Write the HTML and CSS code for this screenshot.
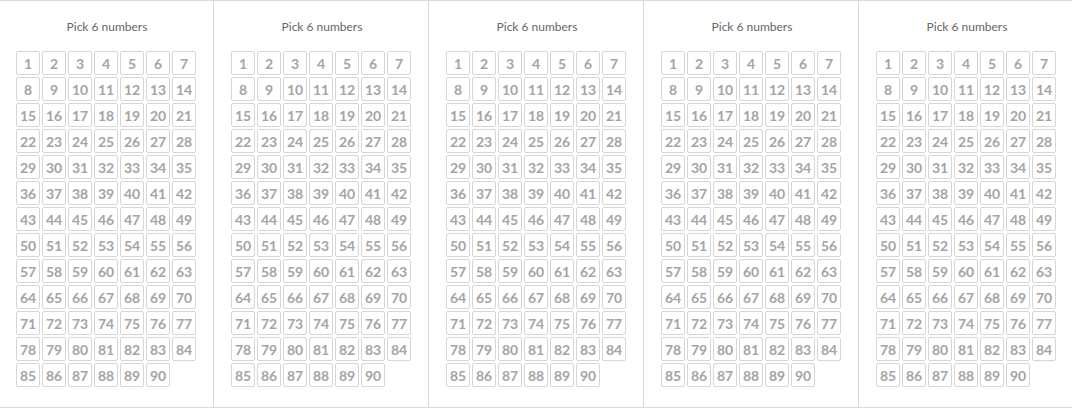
FILE: index.html
```html
<!DOCTYPE html>
<html lang="en">
<head>
<meta charset="utf-8">
<title>Pick 6 numbers</title>
<link rel="stylesheet" href="styles.css">
</head>
<body>
<div class="tickets" id="tickets">
  <section class="ticket"><h2 class="ticket-title">Pick 6 numbers</h2><div class="grid"></div></section>
  <section class="ticket"><h2 class="ticket-title">Pick 6 numbers</h2><div class="grid"></div></section>
  <section class="ticket"><h2 class="ticket-title">Pick 6 numbers</h2><div class="grid"></div></section>
  <section class="ticket"><h2 class="ticket-title">Pick 6 numbers</h2><div class="grid"></div></section>
  <section class="ticket"><h2 class="ticket-title">Pick 6 numbers</h2><div class="grid"></div></section>
</div>
<script src="script.js"></script>
</body>
</html>
```

FILE: styles.css
```css
html, body {
  margin: 0;
  padding: 0;
  background: #fff;
  overflow: hidden;
}
body {
  width: 1072px;
  height: 408px;
  font-family: Lato, "Open Sans", "Liberation Sans", sans-serif;
}
.tickets {
  display: flex;
  margin-left: -2px;
  border-top: 1px solid #d9d9d9;
  border-bottom: 1px solid #d9d9d9;
  height: 406px;
}
.ticket {
  flex: none;
  width: 215px;
  border-left: 1px solid #d9d9d9;
  padding: 0 0 0 17px;
  box-sizing: border-box;
}
.ticket-title {
  margin: 0;
  padding: 17px 0 0 0;
  height: 50px;
  box-sizing: border-box;
  width: 182px;
  text-align: center;
  font-size: 12px;
  font-weight: 400;
  color: #666;
  line-height: 17px;
}
.grid {
  display: grid;
  grid-template-columns: repeat(7, 24px);
  grid-auto-rows: 24px;
  gap: 2px;
}
.cell {
  box-sizing: border-box;
  border: 1px solid #d6d6d6;
  border-radius: 2px;
  display: flex;
  align-items: center;
  justify-content: center;
  font-size: 14px;
  font-weight: 700;
  color: #a4a4a4;
}
```

FILE: script.js
```js
document.querySelectorAll('.grid').forEach(function (g) {
  for (var i = 1; i <= 90; i++) {
    var c = document.createElement('span');
    c.className = 'cell';
    c.textContent = i;
    g.appendChild(c);
  }
});
```
